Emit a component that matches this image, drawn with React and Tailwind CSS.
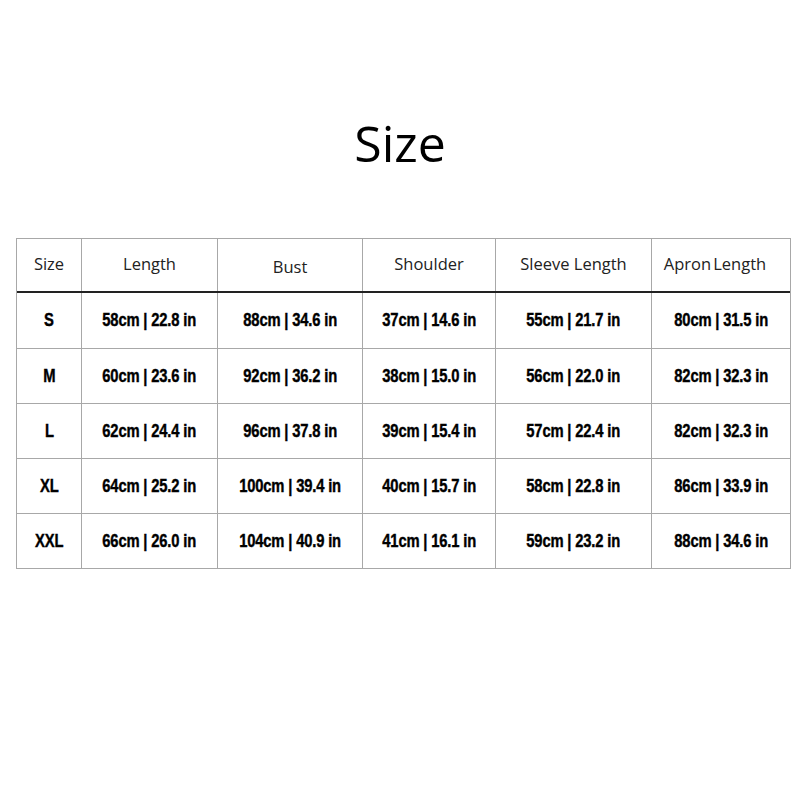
const cols = ["Size", "Length", "Bust", "Shoulder", "Sleeve Length", "ApronLength"];

const rows = [
  ["S", "58cm | 22.8 in", "88cm | 34.6 in", "37cm | 14.6 in", "55cm | 21.7 in", "80cm | 31.5 in"],
  ["M", "60cm | 23.6 in", "92cm | 36.2 in", "38cm | 15.0 in", "56cm | 22.0 in", "82cm | 32.3 in"],
  ["L", "62cm | 24.4 in", "96cm | 37.8 in", "39cm | 15.4 in", "57cm | 22.4 in", "82cm | 32.3 in"],
  ["XL", "64cm | 25.2 in", "100cm | 39.4 in", "40cm | 15.7 in", "58cm | 22.8 in", "86cm | 33.9 in"],
  ["XXL", "66cm | 26.0 in", "104cm | 40.9 in", "41cm | 16.1 in", "59cm | 23.2 in", "88cm | 34.6 in"],
];

const grid = "grid grid-cols-[64px_136px_145px_133px_156px_139px]";

function Header({ label }) {
  if (label === "ApronLength") {
    return (
      <span className="pr-[12px]">
        Apron<span className="ml-[2px]">Length</span>
      </span>
    );
  }
  return <span>{label}</span>;
}

export default function App() {
  return (
    <div className="w-[800px] h-[800px] bg-white flex flex-col items-center">
      <h1 className="mt-[108px] text-[50px] leading-[70px] text-black font-['Open_Sans',sans-serif]">
        Size
      </h1>

      {/* size table */}
      <div className="mt-[60px] ml-[7px] border border-[#a8a8a8] font-['Open_Sans',sans-serif]">
        <div className={`${grid} h-[54px] border-b-2 border-[#222]`}>
          {cols.map((c, i) => (
            <div
              key={c}
              className={`flex items-center justify-center text-[16.5px] text-[#222] ${i > 0 ? "border-l border-[#a8a8a8]" : ""} ${i === 2 ? "pt-[4px]" : "pb-[1px]"}`}
            >
              <Header label={c} />
            </div>
          ))}
        </div>
        {rows.map((r, ri) => (
          <div
            key={r[0]}
            className={`${grid} h-[55px] ${ri > 0 ? "border-t border-[#a8a8a8]" : ""}`}
          >
            {r.map((v, i) => (
              <div
                key={i}
                className={`flex items-center justify-center ${i > 0 ? "border-l border-[#a8a8a8]" : ""}`}
              >
                <span className="inline-block whitespace-nowrap scale-x-[0.82] text-[18px] font-bold text-black tracking-[-0.2px] [-webkit-text-stroke:0.4px_#000] font-['Liberation_Sans',sans-serif]">
                  {v}
                </span>
              </div>
            ))}
          </div>
        ))}
      </div>
    </div>
  );
}
